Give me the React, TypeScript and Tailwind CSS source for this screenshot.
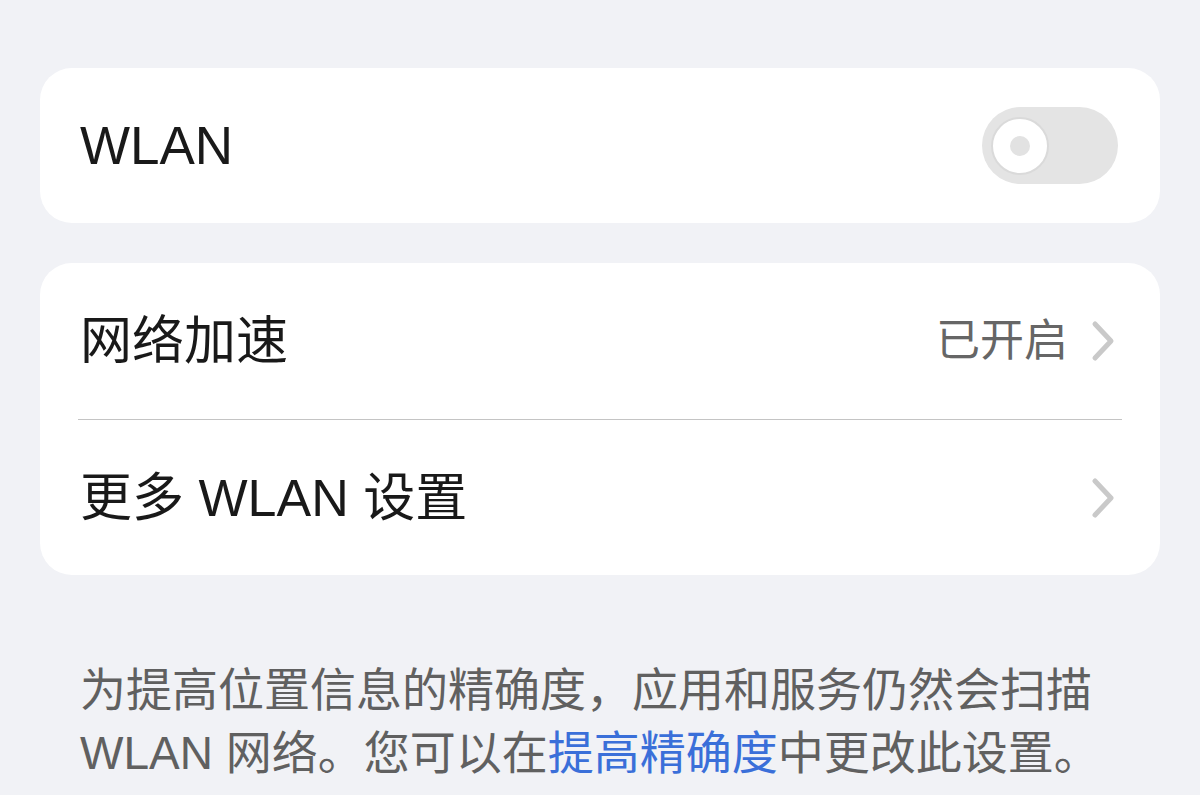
export default function App() {
  const font = { fontFamily: '"Liberation Sans", "Noto Sans CJK SC", sans-serif' };

  const Chevron = () => (
    <svg width="26" height="44" viewBox="0 0 26 44" className="shrink-0">
      <path d="M5 5 L21 22 L5 39" fill="none" stroke="#c9c9c9" strokeWidth="5" strokeLinecap="round" strokeLinejoin="round" />
    </svg>
  );

  return (
    <div
      className="min-h-[795px] w-[1200px] bg-[#f1f2f6] px-10 pt-[68px] text-[#191919]"
      style={font}
    >
      {/* WLAN 开关 */}
      <div className="flex h-[155px] items-center justify-between rounded-[32px] bg-white pl-10 pr-[42px]">
        <span className="text-[53px] leading-none">WLAN</span>
        <div className="flex h-[77px] w-[136px] items-center rounded-full bg-[#e4e4e4] pl-[9px]">
          <div className="flex h-[58px] w-[58px] items-center justify-center rounded-full border-[2px] border-[#dadada] bg-white">
            <div className="h-[20px] w-[20px] rounded-full bg-[#e2e2e2]" />
          </div>
        </div>
      </div>

      {/* 网络加速 / 更多设置 */}
      <div className="mt-10 rounded-[32px] bg-white">
        <div className="flex h-[156px] items-center justify-between pl-10 pr-[44px]">
          <span className="text-[52px] leading-none">网络加速</span>
          <div className="flex items-center gap-[22px]">
            <span className="text-[44px] leading-none text-[#666666]">已开启</span>
            <Chevron />
          </div>
        </div>
        <div className="mx-[38px] h-px bg-[#c4c4c4]" />
        <div className="flex h-[155px] items-center justify-between pl-10 pr-[44px]">
          <span className="text-[52px] leading-none">更多 WLAN 设置</span>
          <Chevron />
        </div>
      </div>

      <p className="mt-[84px] px-10 text-[46px] leading-[63px] text-[#606060]">
        为提高位置信息的精确度，应用和服务仍然会扫描 WLAN 网络。您可以在<span className="text-[#3a6fd9]">提高精确度</span>中更改此设置。
      </p>
    </div>
  );
}
